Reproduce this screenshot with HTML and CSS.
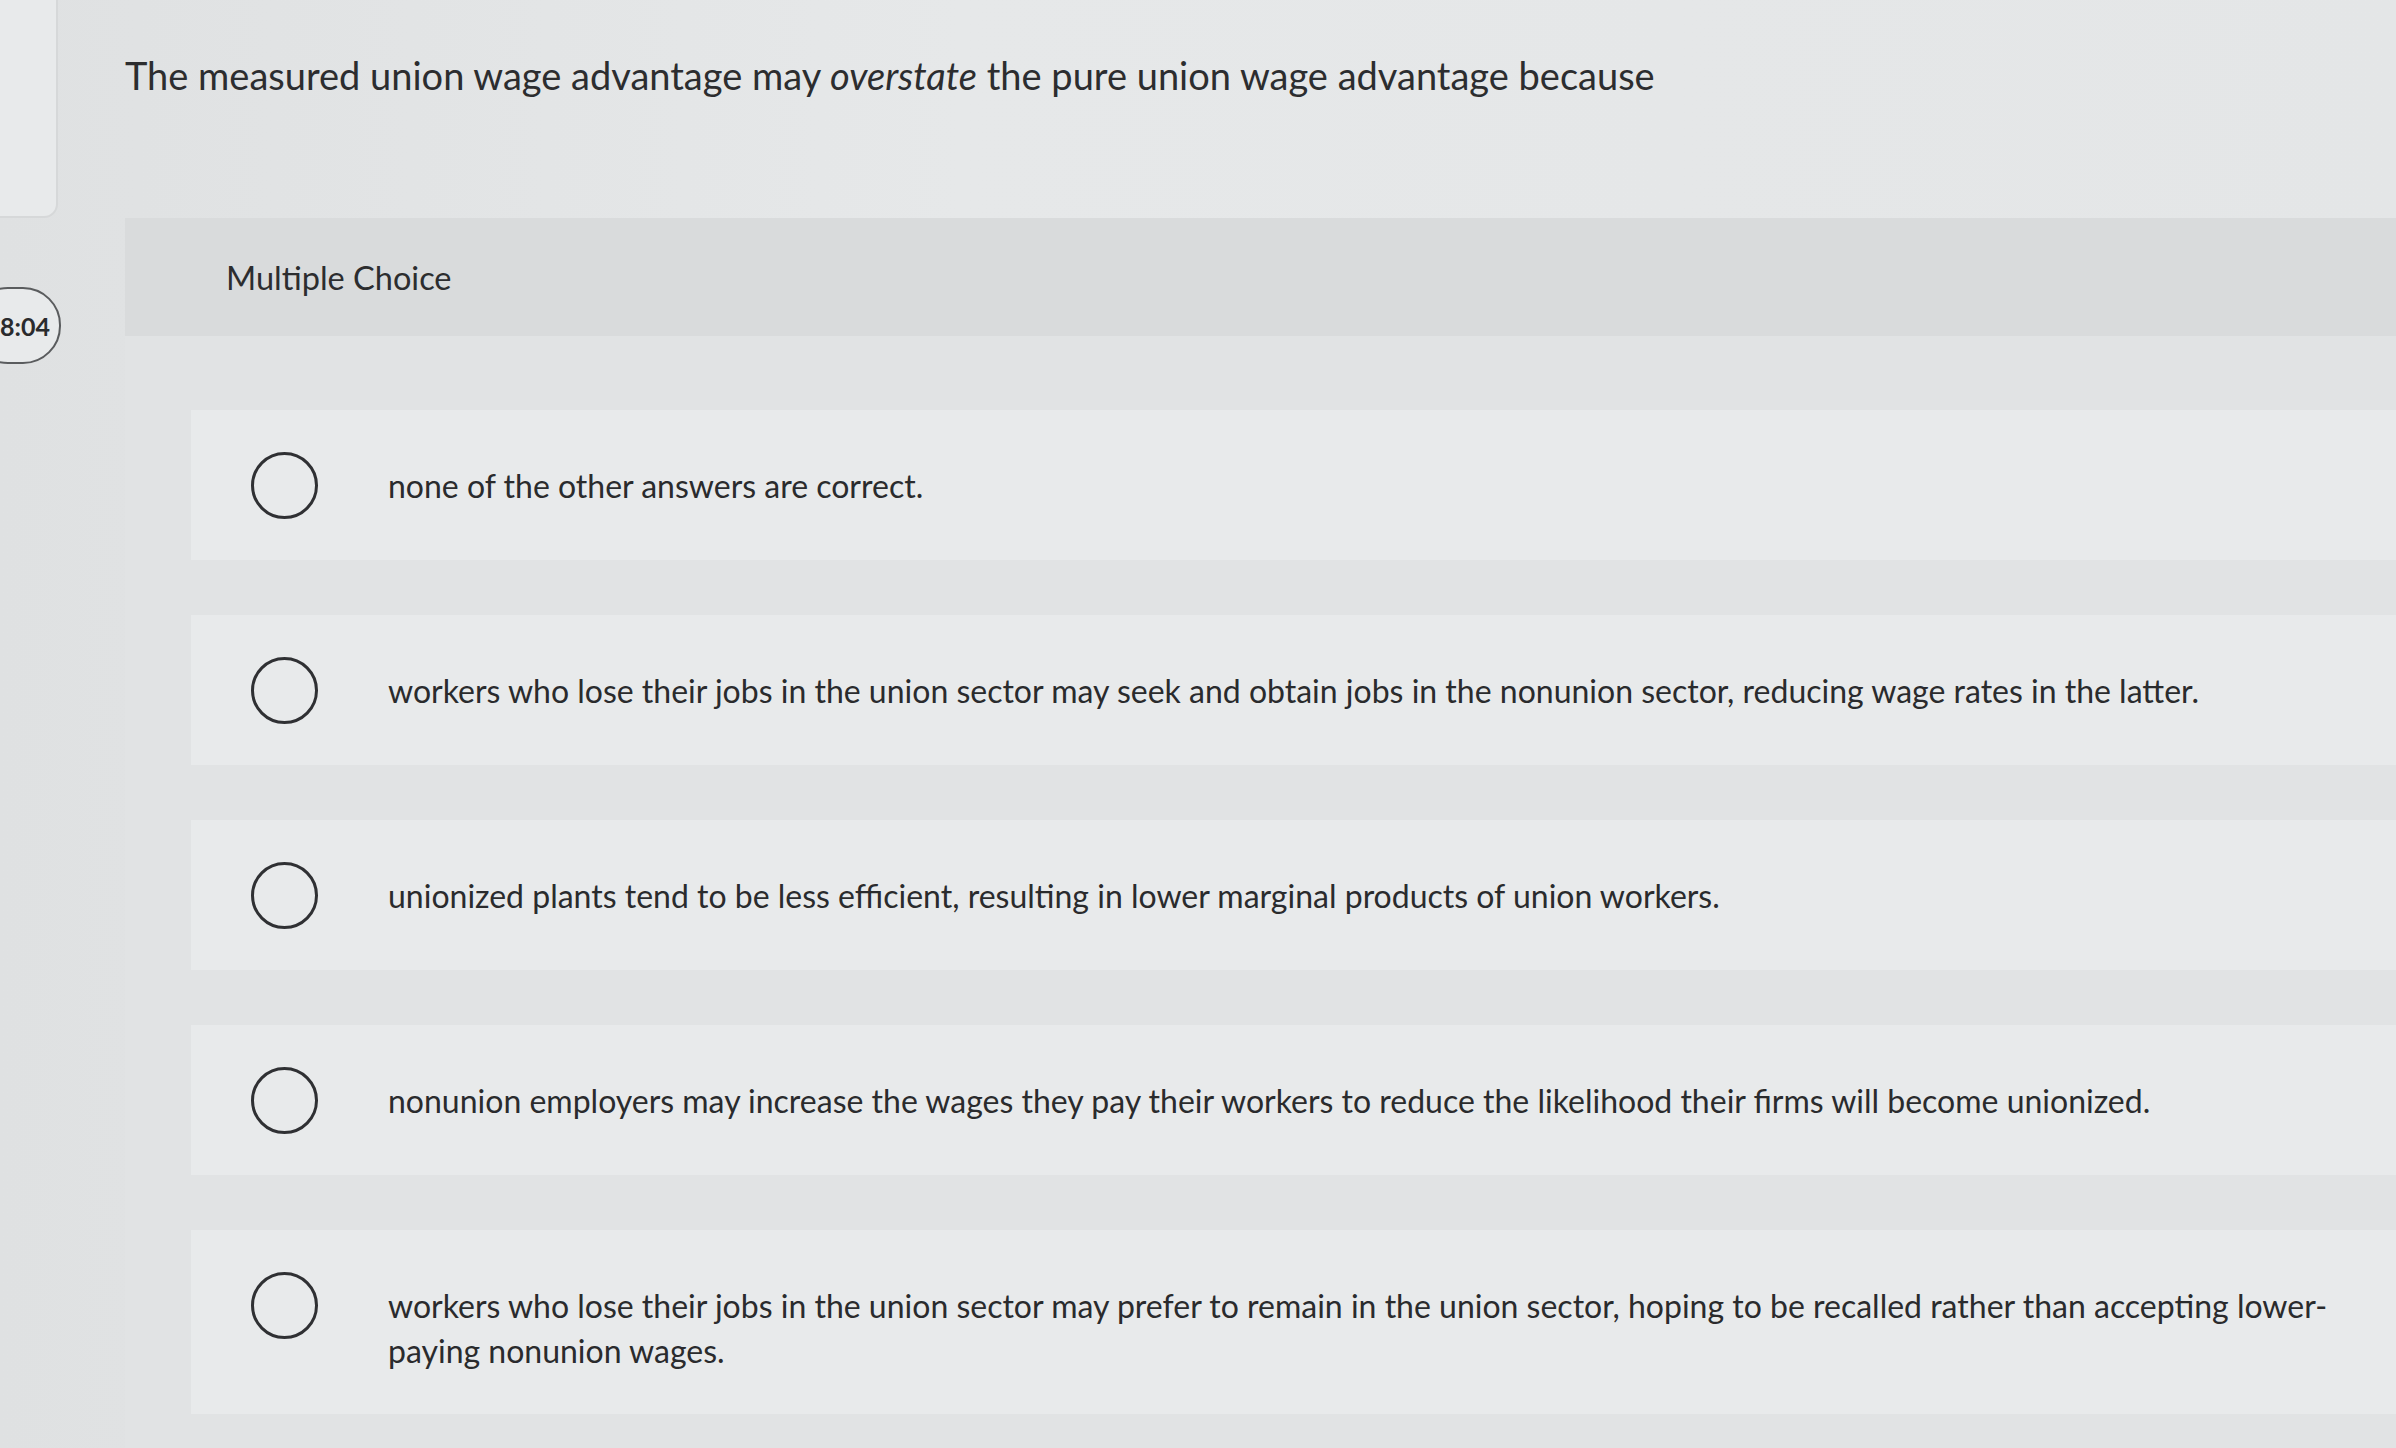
FILE: index.html
```html
<!DOCTYPE html>
<html lang="en">
<head>
<meta charset="utf-8">
<title>Multiple Choice</title>
<link rel="stylesheet" href="styles.css">
</head>
<body>
<div class="page">
  <aside class="sidebar">
    <div class="side-card"></div>
    <div class="timer">8:04</div>
  </aside>
  <main class="main">
    <div class="question">
      <p>The measured union wage advantage may <em>overstate</em> the pure union wage advantage because</p>
    </div>
    <section class="panel">
      <header class="panel-head">Multiple Choice</header>
      <div class="options">
        <label class="option"><span class="radio"></span><span class="opt-text">none of the other answers are correct.</span></label>
        <label class="option"><span class="radio"></span><span class="opt-text">workers who lose their jobs in the union sector may seek and obtain jobs in the nonunion sector, reducing wage rates in the latter.</span></label>
        <label class="option"><span class="radio"></span><span class="opt-text">unionized plants tend to be less efficient, resulting in lower marginal products of union workers.</span></label>
        <label class="option"><span class="radio"></span><span class="opt-text">nonunion employers may increase the wages they pay their workers to reduce the likelihood their firms will become unionized.</span></label>
        <label class="option"><span class="radio"></span><span class="opt-text">workers who lose their jobs in the union sector may prefer to remain in the union sector, hoping to be recalled rather than accepting lower-paying nonunion wages.</span></label>
      </div>
    </section>
  </main>
</div>
</body>
</html>
```
FILE: styles.css
```css
html, body {
  margin: 0;
  padding: 0;
}
body {
  background: linear-gradient(90deg, #dfe1e2 0%, #e6e8e9 40%, #e4e6e7 100%);
  font-family: Lato, "Open Sans", "Liberation Sans", sans-serif;
  color: #2b2c2e;
  width: 2396px;
  height: 1448px;
  overflow: hidden;
}
.page {
  display: grid;
  grid-template-columns: 125px 1fr;
  height: 1448px;
}
.sidebar {
  overflow: hidden;
  display: flex;
  flex-direction: column;
}
.side-card {
  width: 80px;
  height: 232px;
  margin-left: -22px;
  margin-top: -14px;
  border: 2px solid #d6d8d9;
  border-radius: 14px;
  background: #e8eaeb;
  box-sizing: border-box;
}
.timer {
  margin-top: 69px;
  margin-left: -30px;
  width: 91px;
  height: 77px;
  box-sizing: border-box;
  border: 2px solid #5a5c5e;
  border-radius: 38px;
  background: #e8eaeb;
  font-weight: 700;
  font-size: 25px;
  color: #2a2b2d;
  display: flex;
  align-items: center;
  padding-left: 28px;
}
.main {
  display: flex;
  flex-direction: column;
}
.question {
  height: 218px;
  box-sizing: border-box;
  padding-top: 49px;
}
.question p {
  margin: 0;
  font-size: 38px;
  line-height: 52px;
  color: #2c2d2f;
}
.panel {
  flex: 1;
  background: #e1e3e4;
}
.panel-head {
  height: 118px;
  background: #d9dbdc;
  display: flex;
  align-items: center;
  padding-left: 101px;
  font-size: 32.5px;
  color: #2c2d2f;
}
.options {
  padding: 74px 0 0 66px;
  display: flex;
  flex-direction: column;
  gap: 55px;
}
.option {
  display: flex;
  align-items: flex-start;
  background: #e8eaeb;
  padding: 42px 40px 41px 60px;
}
.radio {
  flex: none;
  width: 67px;
  height: 67px;
  box-sizing: border-box;
  border: 3px solid #2f3033;
  border-radius: 50%;
}
.opt-text {
  margin-left: 70px;
  margin-top: 11px;
  font-size: 32px;
  line-height: 45px;
  color: #2a2b2d;
}
```
